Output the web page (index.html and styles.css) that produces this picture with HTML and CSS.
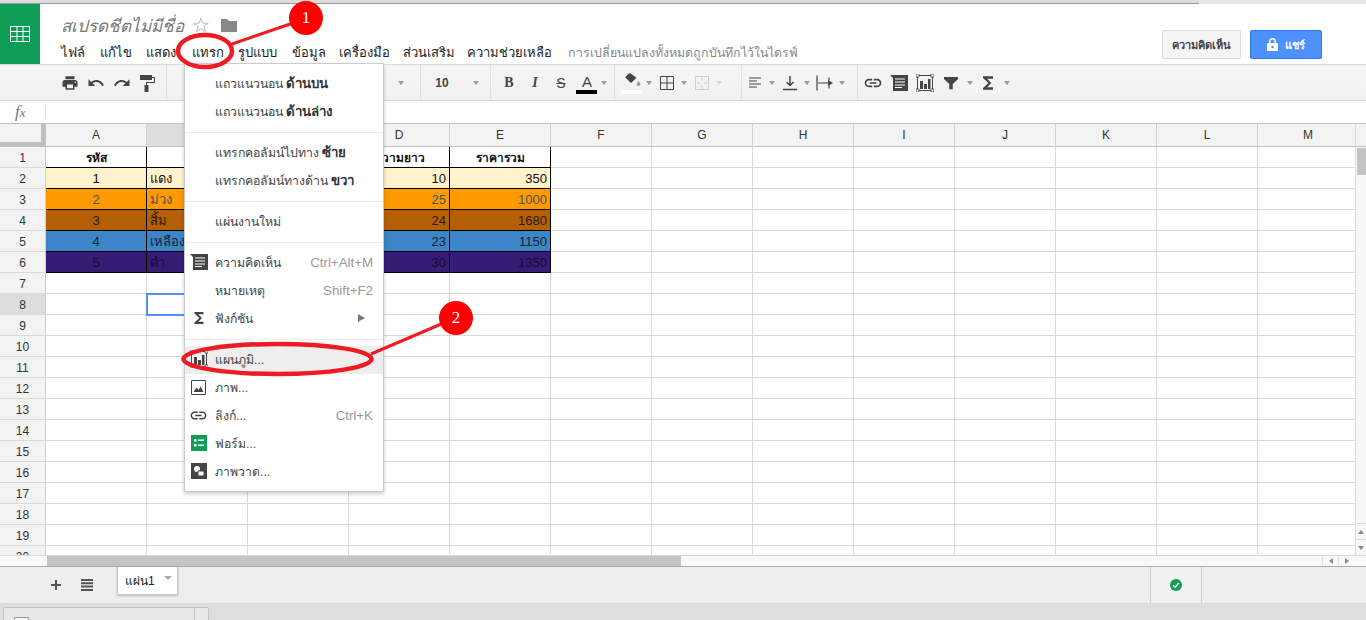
FILE: index.html
```html
<!DOCTYPE html>
<html lang="th">
<head>
    <meta charset="UTF-8">
    <title>สเปรดชีตไม่มีชื่อ</title>
    <link rel="stylesheet" href="styles.css">
</head>
<body>
    <svg class="defs" width="0" height="0">
        <defs>
            <symbol id="i-comment" viewBox="0 0 18 18"><path d="M0 1h18v16H3V4z" fill="#444"/><path d="M5 5h10M5 8h10M5 11h10M5 13.500h7" stroke="#fff" stroke-width="1.200"/></symbol>
            <symbol id="i-chart" viewBox="0 0 18 18"><rect x="1.500" y="1.500" width="15" height="15" fill="none" stroke="#444"/><path d="M4 7h3v8H4zM8 10h3v5H8zM12 5h2.500v10H12z" fill="#444"/><path d="M0 0h3v3H0zM15 0h3v3h-3zM0 15h3v3H0zM15 15h3v3h-3z" fill="#fff" stroke="#444" stroke-width=".8"/></symbol>
            <symbol id="i-link" viewBox="0 0 24 24"><path d="M3.900 12c0-1.710 1.390-3.100 3.100-3.100h4V7H7c-2.760 0-5 2.240-5 5s2.240 5 5 5h4v-1.900H7c-1.710 0-3.100-1.390-3.100-3.100zM8 13h8v-2H8v2zm9-6h-4v1.900h4c1.710 0 3.100 1.390 3.100 3.100s-1.390 3.100-3.100 3.100h-4V17h4c2.760 0 5-2.240 5-5s-2.240-5-5-5z" fill="#444"/></symbol>
            <symbol id="i-sigma" viewBox="0 0 24 24"><path d="M18 4H6v2l6.500 6L6 18v2h12v-3h-7l5-5-5-5h7z" fill="#444"/></symbol>
        </defs>
    </svg>

    <div class="strip"><div class="strip-fill"></div></div>

    <header class="docbar">
        <div class="logo">
            <svg width="20" height="16" viewBox="0 0 20 16"><path d="M.5.5h19v15H.5zM.5 5.500h19M.5 10.500h19M7 .5v15M13 .5v15" fill="none" stroke="#fff"/></svg>
        </div>
        <div class="doc-main">
            <div class="doc-title">
                <span class="title-text">สเปรดชีตไม่มีชื่อ</span>
                <svg class="star" width="16" height="16" viewBox="0 0 16 16"><path d="M8 1l1.800 5.200h5.400l-4.400 3.200 1.700 5.300L8 11.500l-4.500 3.200 1.700-5.300L.8 6.200h5.400z" fill="none" stroke="#bbb"/></svg>
                <svg class="folder" width="16" height="13" viewBox="0 0 16 13"><path d="M0 0h6l2 2h8v11H0z" fill="#888"/></svg>
            </div>
            <nav class="menubar">
                <a class="m-file">ไฟล์</a>
                <a class="m-edit">แก้ไข</a>
                <a class="m-view">แสดง</a>
                <a class="m-insert">แทรก</a>
                <a class="m-format">รูปแบบ</a>
                <a class="m-data">ข้อมูล</a>
                <a class="m-tools">เครื่องมือ</a>
                <a class="m-addons">ส่วนเสริม</a>
                <a class="m-help">ความช่วยเหลือ</a>
                <span class="saved">การเปลี่ยนแปลงทั้งหมดถูกบันทึกไว้ในไดรฟ์</span>
            </nav>
        </div>
        <div class="doc-actions">
            <button class="btn btn-comment">ความคิดเห็น</button>
            <button class="btn btn-share">
                <svg width="11" height="13" viewBox="0 0 11 13"><path d="M1 5h9a1 1 0 0 1 1 1v6a1 1 0 0 1-1 1H1a1 1 0 0 1-1-1V6a1 1 0 0 1 1-1z" fill="#fff"/><path d="M2.800 5.500V3.500a2.700 2.700 0 0 1 5.400 0v2" fill="none" stroke="#fff" stroke-width="1.400"/><circle cx="5.500" cy="9" r="1.300" fill="#4d90fe"/></svg>
                แชร์
            </button>
        </div>
    </header>

    <div class="toolbar">
        <div class="tb-group g-history">
            <span class="ic"><svg width="18" height="18" viewBox="0 0 24 24"><path d="M19 8H5c-1.660 0-3 1.340-3 3v6h4v4h12v-4h4v-6c0-1.660-1.340-3-3-3zm-3 11H8v-5h8v5zm3-7c-.550 0-1-.450-1-1s.450-1 1-1 1 .450 1 1-.450 1-1 1zm-1-9H6v4h12V3z" fill="#444"/></svg></span>
            <span class="ic"><svg width="18" height="18" viewBox="0 0 24 24"><path d="M12.500 8c-2.650 0-5.050.990-6.900 2.600L2 7v9h9l-3.620-3.620c1.390-1.160 3.160-1.880 5.120-1.880 3.540 0 6.550 2.310 7.600 5.500l2.370-.780C21.080 11.030 17.150 8 12.500 8z" fill="#444"/></svg></span>
            <span class="ic"><svg width="18" height="18" viewBox="0 0 24 24"><path d="M18.400 10.600C16.550 8.990 14.150 8 11.500 8c-4.650 0-8.580 3.030-9.960 7.220L3.900 16c1.050-3.190 4.050-5.500 7.600-5.500 1.950 0 3.730.720 5.120 1.880L13 16h9V7l-3.600 3.600z" fill="#444"/></svg></span>
            <span class="ic"><svg width="18" height="18" viewBox="0 0 18 18"><path d="M1 1h12v2h3v6H8v2h1.500v7h-4v-7H7V8h8V4h-2v2H1z" fill="#444"/></svg></span>
        </div>
        <div class="tb-group g-font"><span class="car"></span></div>
        <div class="tb-group g-size"><span class="size-val">10</span><span class="car"></span></div>
        <div class="tb-group g-text">
            <span class="ic ic-b">B</span>
            <span class="ic ic-i">I</span>
            <span class="ic ic-s">S</span>
            <span class="ic ic-a">A</span>
            <span class="car"></span>
        </div>
        <div class="tb-group g-cell">
            <span class="ic ic-fill"><svg width="18" height="16" viewBox="0 0 18 16"><path d="M4 0l1.200 1.200L2.500 4l-.3.300L8 10l5.500-5.200L7 0l-1 1z" fill="#444"/><path d="M15.500 8s-1.800 2-1.800 3.200a1.800 1.800 0 0 0 3.600 0C17.300 10 15.500 8 15.500 8z" fill="#999"/></svg></span>
            <span class="car"></span>
            <span class="ic"><svg width="16" height="16" viewBox="0 0 16 16"><path d="M1.500 1.500h13v13h-13zM8 1.500v13M1.500 8h13" fill="none" stroke="#444"/></svg></span>
            <span class="car"></span>
            <span class="ic"><svg width="16" height="16" viewBox="0 0 16 16"><path d="M1.500 1.500h13v13h-13zM8 1.500v4M8 10.500v4M3 8h3M10 8h3" fill="none" stroke="#ccc"/></svg></span>
            <span class="car car-off"></span>
        </div>
        <div class="tb-group g-align">
            <span class="ic"><svg width="14" height="14" viewBox="0 0 14 14"><path d="M1 2h12M1 5h8M1 8h12M1 11h8" stroke="#444" stroke-width="1.200"/></svg></span>
            <span class="car"></span>
            <span class="ic"><svg width="16" height="16" viewBox="0 0 16 16"><path d="M8 1v9M4.500 7L8 10.500 11.500 7M1 14.500h14" fill="none" stroke="#444" stroke-width="1.500"/></svg></span>
            <span class="car"></span>
            <span class="ic"><svg width="18" height="16" viewBox="0 0 18 16"><path d="M1 .5v15M13 2.500v3M13 10.500v3M2 8h11" fill="none" stroke="#444" stroke-width="1.200"/><path d="M12 5l5 3-5 3z" fill="#444"/></svg></span>
            <span class="car"></span>
        </div>
        <div class="tb-group g-insert">
            <span class="ic"><svg width="20" height="20"><use href="#i-link"/></svg></span>
            <span class="ic"><svg width="18" height="18"><use href="#i-comment"/></svg></span>
            <span class="ic"><svg width="18" height="18"><use href="#i-chart"/></svg></span>
            <span class="ic"><svg width="14" height="14" viewBox="0 0 16 16"><path d="M0 1h16v2.500L10 9v6H6V9L0 3.500z" fill="#444"/></svg></span>
            <span class="car car-far"></span>
            <span class="ic"><svg width="20" height="20"><use href="#i-sigma"/></svg></span>
            <span class="car car-far"></span>
        </div>
    </div>

    <div class="formula">
        <span class="fx">f<small>x</small></span>
        <span class="fx-input"></span>
    </div>

    <div class="sheet">
        <div class="grid">
            <table>
                <thead>
                    <tr><th class="corner"></th><th>A</th><th class="on">B</th><th>C</th><th>D</th><th>E</th><th>F</th><th>G</th><th>H</th><th>I</th><th>J</th><th>K</th><th>L</th><th>M</th></tr>
                </thead>
                <tbody>
                    <tr class="data"><th>1</th><td class="head">รหัส</td><td class="head">สี</td><td class="head">ราคา</td><td class="head">ความยาว</td><td class="head">ราคารวม</td><td></td><td></td><td></td><td></td><td></td><td></td><td></td><td></td></tr>
                    <tr class="data r2"><th>2</th><td class="mid">1</td><td>แดง</td><td class="num">35</td><td class="num">10</td><td class="num">350</td><td></td><td></td><td></td><td></td><td></td><td></td><td></td><td></td></tr>
                    <tr class="data r3"><th>3</th><td class="mid">2</td><td>ม่วง</td><td class="num">40</td><td class="num">25</td><td class="num">1000</td><td></td><td></td><td></td><td></td><td></td><td></td><td></td><td></td></tr>
                    <tr class="data r4"><th>4</th><td class="mid">3</td><td>สิ้ม</td><td class="num">70</td><td class="num">24</td><td class="num">1680</td><td></td><td></td><td></td><td></td><td></td><td></td><td></td><td></td></tr>
                    <tr class="data r5"><th>5</th><td class="mid">4</td><td>เหลือง</td><td class="num">50</td><td class="num">23</td><td class="num">1150</td><td></td><td></td><td></td><td></td><td></td><td></td><td></td><td></td></tr>
                    <tr class="data r6"><th>6</th><td class="mid">5</td><td>ดำ</td><td class="num">45</td><td class="num">30</td><td class="num">1350</td><td></td><td></td><td></td><td></td><td></td><td></td><td></td><td></td></tr>
                    <tr><th>7</th><td></td><td></td><td></td><td></td><td></td><td></td><td></td><td></td><td></td><td></td><td></td><td></td><td></td></tr>
                    <tr><th class="on">8</th><td></td><td class="selected"></td><td></td><td></td><td></td><td></td><td></td><td></td><td></td><td></td><td></td><td></td><td></td></tr>
                    <tr><th>9</th><td></td><td></td><td></td><td></td><td></td><td></td><td></td><td></td><td></td><td></td><td></td><td></td><td></td></tr>
                    <tr><th>10</th><td></td><td></td><td></td><td></td><td></td><td></td><td></td><td></td><td></td><td></td><td></td><td></td><td></td></tr>
                    <tr><th>11</th><td></td><td></td><td></td><td></td><td></td><td></td><td></td><td></td><td></td><td></td><td></td><td></td><td></td></tr>
                    <tr><th>12</th><td></td><td></td><td></td><td></td><td></td><td></td><td></td><td></td><td></td><td></td><td></td><td></td><td></td></tr>
                    <tr><th>13</th><td></td><td></td><td></td><td></td><td></td><td></td><td></td><td></td><td></td><td></td><td></td><td></td><td></td></tr>
                    <tr><th>14</th><td></td><td></td><td></td><td></td><td></td><td></td><td></td><td></td><td></td><td></td><td></td><td></td><td></td></tr>
                    <tr><th>15</th><td></td><td></td><td></td><td></td><td></td><td></td><td></td><td></td><td></td><td></td><td></td><td></td><td></td></tr>
                    <tr><th>16</th><td></td><td></td><td></td><td></td><td></td><td></td><td></td><td></td><td></td><td></td><td></td><td></td><td></td></tr>
                    <tr><th>17</th><td></td><td></td><td></td><td></td><td></td><td></td><td></td><td></td><td></td><td></td><td></td><td></td><td></td></tr>
                    <tr><th>18</th><td></td><td></td><td></td><td></td><td></td><td></td><td></td><td></td><td></td><td></td><td></td><td></td><td></td></tr>
                    <tr><th>19</th><td></td><td></td><td></td><td></td><td></td><td></td><td></td><td></td><td></td><td></td><td></td><td></td><td></td></tr>
                    <tr><th>20</th><td></td><td></td><td></td><td></td><td></td><td></td><td></td><td></td><td></td><td></td><td></td><td></td><td></td></tr>
                </tbody>
            </table>
        </div>
        <div class="vscroll">
            <div class="vscroll-head"></div>
            <div class="vscroll-track"><div class="vscroll-thumb"></div></div>
            <div class="vscroll-btn"><span class="tri-up"></span></div>
            <div class="vscroll-btn"><span class="tri-down"></span></div>
        </div>
    </div>

    <div class="hscroll">
        <div class="hscroll-track"><div class="hscroll-thumb"></div></div>
        <div class="hscroll-btn"><span class="tri-left"></span></div>
        <div class="hscroll-btn"><span class="tri-right"></span></div>
    </div>

    <div class="tabs">
        <svg class="tab-add" width="12" height="12" viewBox="0 0 12 12"><path d="M6 1v10M1 6h10" stroke="#555" stroke-width="2"/></svg>
        <svg class="tab-list" width="12" height="12" viewBox="0 0 12 12"><path d="M0 1h12M0 4.300h12M0 7.600h12M0 11h12" stroke="#555" stroke-width="2"/></svg>
        <div class="tab">แผ่น1<span class="tab-car"></span></div>
        <div class="status">
            <svg width="12" height="12" viewBox="0 0 12 12"><circle cx="6" cy="6" r="6" fill="#0f9d58"/><path d="M3.200 6.200L5.200 8.200 8.800 4" fill="none" stroke="#fff" stroke-width="1.500"/></svg>
        </div>
    </div>

    <div class="taskbar">
        <div class="task"><div class="task-check"></div><div class="task-more"></div></div>
    </div>

    <!-- เมนูแทรก -->
    <div class="menu">
        <div class="item"><span class="slot"></span>แถวแนวนอน&nbsp;<b>ด้านบน</b></div>
        <div class="item"><span class="slot"></span>แถวแนวนอน&nbsp;<b>ด้านล่าง</b></div>
        <div class="sep"></div>
        <div class="item"><span class="slot"></span>แทรกคอลัมน์ไปทาง&nbsp;<b>ซ้าย</b></div>
        <div class="item"><span class="slot"></span>แทรกคอลัมน์ทางด้าน&nbsp;<b>ขวา</b></div>
        <div class="sep"></div>
        <div class="item"><span class="slot"></span>แผ่นงานใหม่</div>
        <div class="sep"></div>
        <div class="item"><span class="slot"><svg width="18" height="18"><use href="#i-comment"/></svg></span>ความคิดเห็น<span class="key">Ctrl+Alt+M</span></div>
        <div class="item"><span class="slot"></span>หมายเหตุ<span class="key">Shift+F2</span></div>
        <div class="item"><span class="slot"><svg width="18" height="18"><use href="#i-sigma"/></svg></span>ฟังก์ชัน<span class="sub"></span></div>
        <div class="sep"></div>
        <div class="item hover"><span class="slot"><svg width="18" height="18"><use href="#i-chart"/></svg></span>แผนภูมิ...</div>
        <div class="item"><span class="slot"><svg width="15" height="15" viewBox="0 0 15 15"><path d="M.5.5h14v14H.5z" fill="#fff" stroke="#444"/><path d="M2.500 12L5.500 7.500 7.500 10 9.500 6.500 12.500 12z" fill="#444"/></svg></span>ภาพ...</div>
        <div class="item"><span class="slot"><svg width="19" height="19"><use href="#i-link"/></svg></span>ลิงก์...<span class="key">Ctrl+K</span></div>
        <div class="item"><span class="slot"><svg width="16" height="16" viewBox="0 0 16 16"><path d="M0 0h16v16H0z" fill="#0f9d58"/><path d="M3 4h2.500v2.500H3zM3 9h2.500v2.500H3zM7 4.500h6v1.500H7zM7 9.500h6V11H7z" fill="#fff"/></svg></span>ฟอร์ม...</div>
        <div class="item"><span class="slot"><svg width="16" height="16" viewBox="0 0 16 16"><path d="M0 0h16v16H0z" fill="#444"/><circle cx="6" cy="6" r="3" fill="#fff"/><path d="M7 8h6v5H7z" fill="#fff" stroke="#444"/></svg></span>ภาพวาด...</div>
    </div>

    <!-- คำอธิบายสีแดงบนภาพ -->
    <svg class="marks" width="1366" height="620" viewBox="0 0 1366 620">
        <ellipse cx="205" cy="51" rx="27" ry="16" fill="none" stroke="#ed1c24" stroke-width="4.500"/>
        <path d="M232 44L296 22" stroke="#ed1c24" stroke-width="3"/>
        <ellipse cx="277.500" cy="359" rx="94" ry="15" fill="none" stroke="#ed1c24" stroke-width="4.500"/>
        <path d="M371 354L446 322" stroke="#ed1c24" stroke-width="3"/>
    </svg>
    <div class="badge badge-one">1</div>
    <div class="badge badge-two">2</div>
</body>
</html>
```

FILE: styles.css
```css
* {
    box-sizing: border-box;
}
html, body {
    margin: 0;
    height: 620px;
    overflow: hidden;
}
body {
    position: relative;
    display: flex;
    flex-direction: column;
    background: #fff;
    color: #222;
    font-family: "Liberation Sans", Tahoma, "Noto Sans", "DejaVu Sans", sans-serif;
    font-size: 13px;
}
.defs {
    position: absolute;
}

/* top strip */
.strip {
    height: 4px;
    background: #e5e5e5;
    flex: none;
}
.strip-fill {
    width: 1199px;
    height: 4px;
    background: #dcdcdc;
    border-bottom: 1px solid #999;
}

/* doc header */
.docbar {
    display: flex;
    height: 60px;
    flex: none;
}
.logo {
    width: 40px;
    background: #0f9d58;
    display: flex;
    align-items: center;
    justify-content: center;
}
.doc-main {
    flex: 1;
    padding: 9px 0 0 21px;
}
.doc-title {
    display: flex;
    align-items: center;
    height: 24px;
}
.title-text {
    font-size: 17px;
    font-style: italic;
    color: #777;
    width: 132px;
    white-space: nowrap;
}
.star {
    margin-right: 12px;
}
.menubar {
    display: flex;
    align-items: center;
    height: 24px;
    margin-top: 3px;
    white-space: nowrap;
    color: #222;
}
.menubar a {
    display: block;
}
.m-file { width: 39px; }
.m-edit { width: 46px; }
.m-view { width: 46px; }
.m-insert { width: 46px; }
.m-format { width: 54px; }
.m-data { width: 47px; }
.m-tools { width: 64px; }
.m-addons { width: 64px; }
.m-help { width: 101px; }
.saved {
    color: #888;
    font-size: 12.4px;
}
.doc-actions {
    display: flex;
    gap: 9px;
    padding: 26px 44px 0 0;
}
.btn {
    height: 29px;
    border-radius: 2px;
    font-family: inherit;
    font-size: 11px;
    font-weight: bold;
    padding: 0;
}
.btn-comment {
    width: 79px;
    background: #f5f5f5;
    border: 1px solid #dcdcdc;
    color: #444;
}
.btn-share {
    width: 72px;
    background: #4d90fe;
    border: 1px solid #3079ed;
    color: #fff;
    display: flex;
    align-items: center;
    justify-content: center;
    gap: 7px;
}

/* toolbar */
.toolbar {
    display: flex;
    height: 37px;
    flex: none;
    background: linear-gradient(#f5f5f5, #f1f1f1);
    border-top: 1px solid #d9d9d9;
    border-bottom: 1px solid #d9d9d9;
}
.tb-group {
    display: flex;
    align-items: center;
    border-right: 1px solid #e0e0e0;
    flex: none;
}
.g-history { padding: 0 4px 0 57px; width: 167px; }
.g-font { padding-left: 230px; width: 254px; }
.g-size { width: 70px; }
.g-text { padding-left: 5px; width: 124px; }
.g-cell { padding-left: 4px; width: 127px; }
.g-align { width: 116px; }
.g-insert { padding-left: 2px; border-right: none; }
.ic {
    width: 26px;
    height: 22px;
    display: flex;
    align-items: center;
    justify-content: center;
    color: #444;
    flex: none;
}
.ic-b { font-family: "Liberation Serif", serif; font-weight: bold; font-size: 14px; }
.ic-i { font-family: "Liberation Serif", serif; font-style: italic; font-weight: bold; font-size: 14px; }
.ic-s { text-decoration: line-through; font-size: 14px; }
.ic-a { font-size: 15px; position: relative; padding-bottom: 3px; }
.ic-a::after {
    content: "";
    position: absolute;
    left: 2px;
    right: 3px;
    bottom: 0;
    height: 4px;
    background: #000;
}
.ic-fill { position: relative; padding-bottom: 3px; }
.ic-fill::after {
    content: "";
    position: absolute;
    left: 2px;
    right: 3px;
    bottom: 0;
    height: 4px;
    background: #fff;
}
.car {
    width: 9px;
    height: 4px;
    flex: none;
    position: relative;
}
.car-far {
    margin-left: 2px;
}
.car::after {
    content: "";
    position: absolute;
    left: 1px;
    top: 0;
    border-left: 3.500px solid transparent;
    border-right: 3.500px solid transparent;
    border-top: 4px solid #999;
}
.car-off::after {
    border-top-color: #d5d5d5;
}
.size-val {
    width: 42px;
    text-align: center;
    font-size: 12px;
    font-weight: bold;
    color: #444;
    margin-right: 9px;
}

/* formula bar */
.formula {
    display: flex;
    align-items: center;
    height: 22px;
    flex: none;
}
.fx {
    width: 45px;
    padding-left: 15px;
    font-family: "Liberation Serif", serif;
    font-style: italic;
    font-size: 17px;
    color: #777;
}
.fx small {
    font-size: 13px;
}
.fx-input {
    width: 1px;
    height: 11px;
    background: #d3e3f5;
}

/* grid */
.sheet {
    display: flex;
    height: 432px;
    flex: none;
    overflow: hidden;
}
.grid {
    width: 1355px;
    overflow: hidden;
    flex: none;
}
table {
    width: 1359px;
    table-layout: fixed;
    border-collapse: separate;
    border-spacing: 0;
}
thead th {
    height: 24px;
    background: #f3f3f3;
    border-top: 1px solid #c0c0c0;
    border-right: 1px solid #d0d0d0;
    border-bottom: 1px solid #c0c0c0;
    font-size: 12px;
    font-weight: normal;
    width: 101px;
    padding: 0;
    color: #333;
}
thead th.corner {
    width: 46px;
    border-right: 5px solid #c0c0c0;
    border-bottom: 5px solid #c0c0c0;
}
thead th.on {
    background: #ddd;
}
tbody th {
    height: 21px;
    background: #f3f3f3;
    border-right: 1px solid #d0d0d0;
    border-bottom: 1px solid #d9d9d9;
    font-size: 12px;
    font-weight: normal;
    line-height: 14px;
    color: #333;
    padding: 1px 0 0;
}
tbody th.on {
    background: #ddd;
}
td {
    height: 21px;
    padding: 1px 3px 0;
    border-right: 1px solid #d9d9d9;
    border-bottom: 1px solid #d9d9d9;
    white-space: nowrap;
    overflow: hidden;
    font-size: 13px;
    line-height: 14px;
    color: #111;
}
.data td:nth-child(-n+6) {
    border-right-color: #000;
    border-bottom-color: #000;
}
.head {
    text-align: center;
    font-weight: bold;
    font-size: 12px;
}
.mid { text-align: center; }
.num { text-align: right; }
.r2 td:nth-child(-n+6) { background: #fff2cc; }
.r3 td:nth-child(-n+6) { background: #ff9900; color: #45555a; }
.r4 td:nth-child(-n+6) { background: #b45f06; color: #2a1a06; }
.r5 td:nth-child(-n+6) { background: #3d85c6; color: #0d2236; }
.r6 td:nth-child(-n+6) { background: #351c75; color: #160a38; }
td.selected {
    outline: 2px solid #4d90fe;
    outline-offset: -1px;
}
.vscroll {
    flex: 1;
    display: flex;
    flex-direction: column;
    border-left: 1px solid #d9d9d9;
    background: #f8f8f8;
}
.vscroll-head {
    height: 24px;
    background: #f3f3f3;
    border-top: 1px solid #c0c0c0;
    border-bottom: 1px solid #c0c0c0;
}
.vscroll-track {
    flex: 1;
    padding: 1px 0 0 1px;
}
.vscroll-thumb {
    width: 9px;
    height: 27px;
    background: #c4c4c4;
}
.vscroll-btn {
    height: 16px;
    border-top: 1px solid #d9d9d9;
    display: flex;
    align-items: center;
    justify-content: center;
}
.tri-up {
    border-left: 3.500px solid transparent;
    border-right: 3.500px solid transparent;
    border-bottom: 4px solid #888;
}
.tri-down {
    border-left: 3.500px solid transparent;
    border-right: 3.500px solid transparent;
    border-top: 4px solid #888;
}
.hscroll {
    display: flex;
    height: 12px;
    flex: none;
    background: #f8f8f8;
    border-top: 1px solid #d9d9d9;
    border-bottom: 1px solid #aaa;
    padding-right: 12px;
}
.hscroll-track {
    flex: 1;
    padding-left: 47px;
}
.hscroll-thumb {
    width: 634px;
    height: 10px;
    background: #c4c4c4;
}
.hscroll-btn {
    width: 16px;
    border-left: 1px solid #e0e0e0;
    display: flex;
    align-items: center;
    justify-content: center;
}
.tri-left {
    border-top: 3.500px solid transparent;
    border-bottom: 3.500px solid transparent;
    border-right: 4px solid #888;
}
.tri-right {
    border-top: 3.500px solid transparent;
    border-bottom: 3.500px solid transparent;
    border-left: 4px solid #888;
}

/* sheet tabs */
.tabs {
    display: flex;
    align-items: flex-start;
    height: 37px;
    flex: none;
    background: #eee;
    border-bottom: 1px solid #d9d9d9;
}
.tab-add {
    margin: 12px 0 0 50px;
}
.tab-list {
    margin: 12px 0 0 19px;
}
.tab {
    width: 61px;
    height: 28px;
    margin-left: 24px;
    padding: 4px 0 0 7px;
    background: #fff;
    border: 1px solid #c8c8c8;
    border-top: none;
    box-shadow: 0 1px 2px rgba(0,0,0,.25);
    display: flex;
    align-items: flex-start;
    font-size: 12px;
    color: #222;
}
.tab-car {
    margin: 5px 0 0 9px;
    border-left: 4px solid transparent;
    border-right: 4px solid transparent;
    border-top: 4px solid #aaa;
}
.status {
    width: 52px;
    height: 36px;
    margin-left: 972px;
    background: #f1f1f1;
    border-left: 1px solid #d0d0d0;
    border-right: 1px solid #d0d0d0;
    display: flex;
    align-items: center;
    justify-content: center;
}

/* browser chrome at the bottom */
.taskbar {
    flex: 1;
    background: #dedede;
    padding: 3px 0 0 3px;
}
.task {
    display: flex;
    width: 206px;
    height: 20px;
    background: #e8e8e8;
    border: 1px solid #c4c4c4;
    border-radius: 2px 2px 0 0;
}
.task-check {
    width: 15px;
    height: 12px;
    margin: 9px 0 0 10px;
    background: #f5f5f5;
    border: 1px solid #999;
}
.task-more {
    width: 14px;
    margin-left: auto;
    border-left: 1px solid #c4c4c4;
}

/* insert menu */
.menu {
    position: absolute;
    left: 184px;
    top: 63px;
    width: 200px;
    height: 429px;
    padding: 6px 0;
    background: #fff;
    border: 1px solid #ccc;
    box-shadow: 0 2px 4px rgba(0,0,0,.2);
    color: #444;
    font-size: 12.3px;
}
.item {
    display: flex;
    align-items: center;
    height: 28px;
    padding: 0 10px 2px 0;
    white-space: nowrap;
}
.item b {
    color: #333;
    font-size: 13.3px;
}
.item.hover {
    background: #eee;
}
.slot {
    width: 30px;
    display: flex;
    align-items: center;
    justify-content: center;
    padding-right: 3px;
    flex: none;
}
.key {
    margin-left: auto;
    color: #999;
    font-size: 13.3px;
}
.sub {
    margin-left: auto;
    margin-right: 8px;
    border-top: 4px solid transparent;
    border-bottom: 4px solid transparent;
    border-left: 7px solid #777;
}
.sep {
    height: 1px;
    margin: 6px 0;
    background: #ebebeb;
}

/* red callouts */
.marks {
    position: absolute;
    left: 0;
    top: 0;
    pointer-events: none;
}
.badge {
    position: absolute;
    width: 34px;
    height: 34px;
    border-radius: 50%;
    background: #f00;
    color: #fff;
    font-family: "Liberation Serif", serif;
    font-size: 17px;
    line-height: 34px;
    text-align: center;
}
.badge-one {
    left: 289px;
    top: 1px;
}
.badge-two {
    left: 439px;
    top: 301px;
}
```
